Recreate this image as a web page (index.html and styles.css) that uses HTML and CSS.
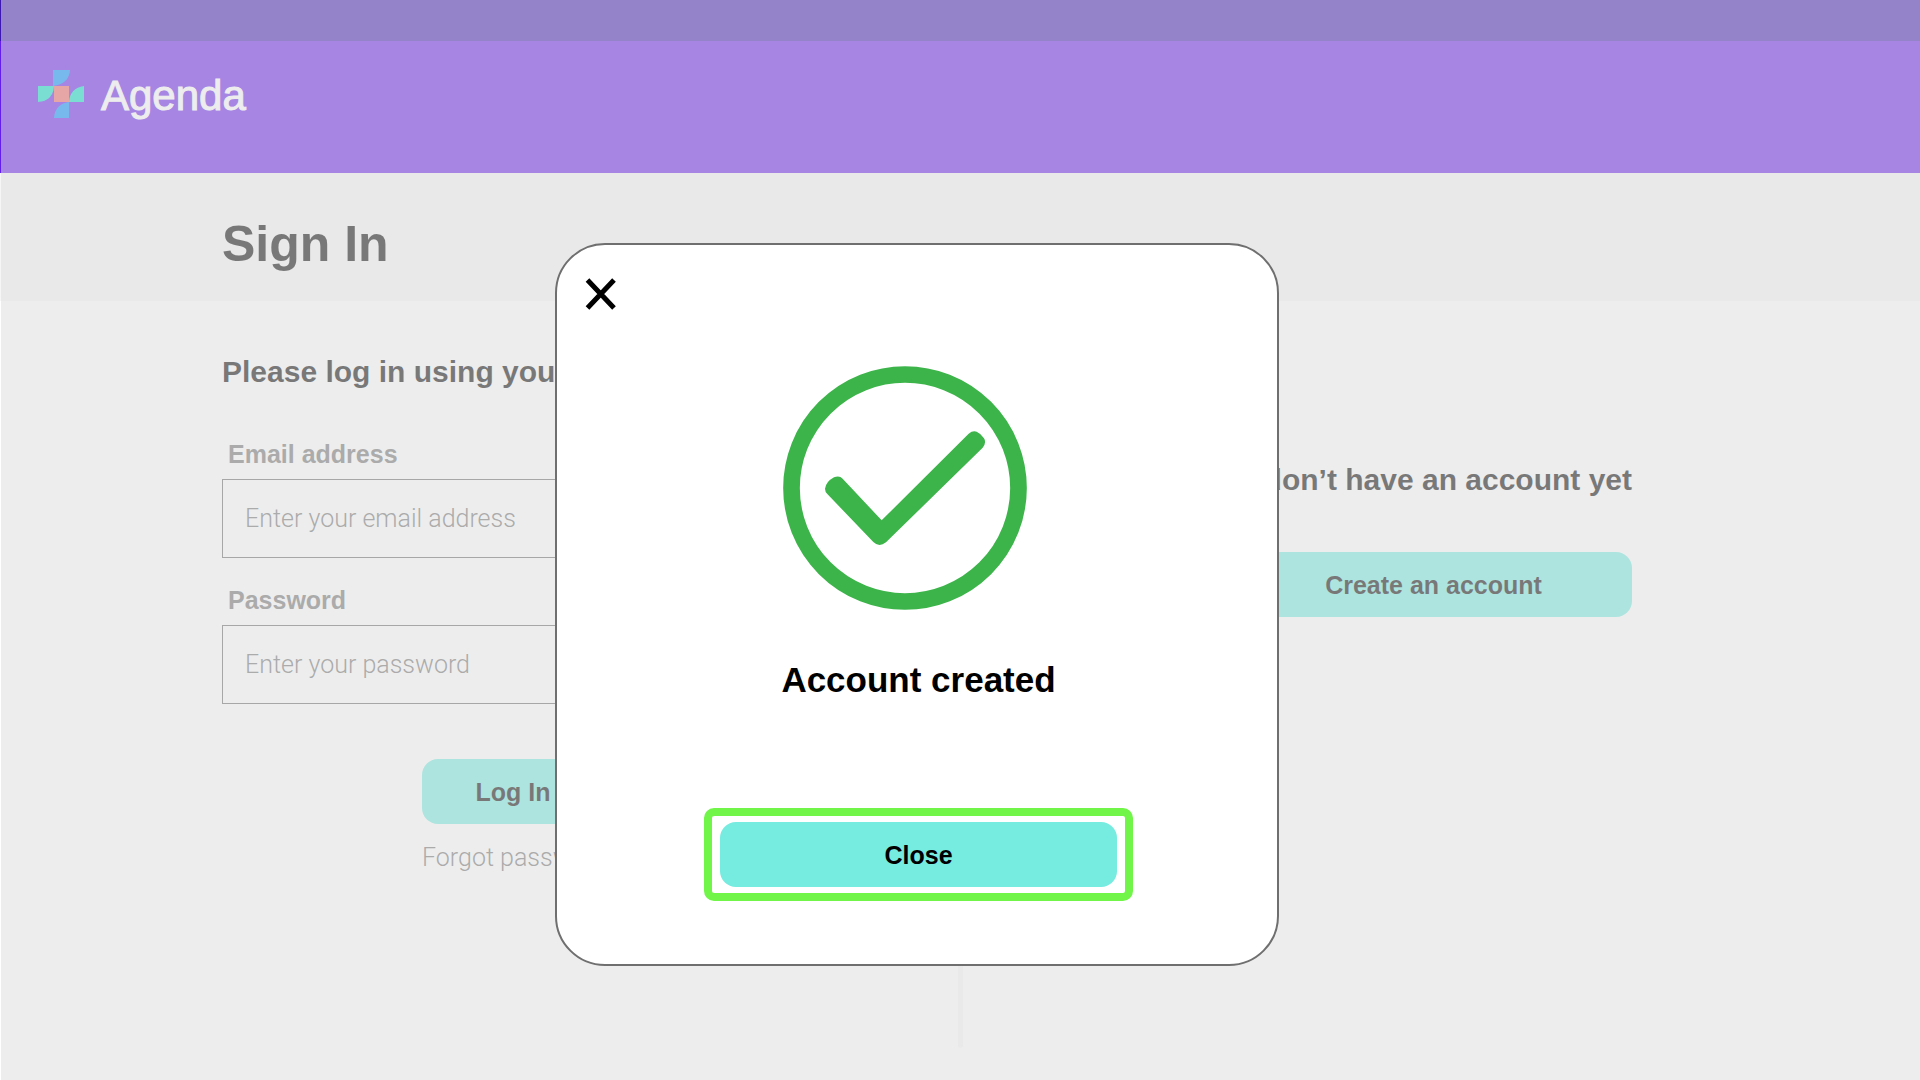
FILE: index.html
```
<!DOCTYPE html>
<html lang="en">
<head>
<meta charset="utf-8">
<title>Agenda – Sign In</title>
<link rel="stylesheet" href="styles.css">
</head>
<body>
<header class="header">
  <div class="status-bar"></div>
  <a class="brand" href="#">
    <svg class="brand-mark" viewBox="0 0 48 48" aria-hidden="true">
      <path fill="#028ffe" d="M16 0H33Q32 14 16 16ZM32 48H17Q18 34 32 32Z"/>
      <path fill="#06dec6" d="M1 16H17Q16 31 1 32ZM47 32H32Q33 18 47 16Z"/>
      <path fill="#f16464" d="M17 16H32V32H17Z"/>
    </svg>
    <span class="brand-name">Agenda</span>
  </a>
</header>
<div class="title-band"><h1 class="title">Sign In</h1></div>
<main class="main">
  <form class="login">
    <h2 class="heading">Please log in using your account</h2>
    <div class="field">
      <label class="label" for="email">Email address</label>
      <input class="input" id="email" type="email" placeholder="Enter your email address">
    </div>
    <div class="field">
      <label class="label" for="password">Password</label>
      <input class="input" id="password" type="password" placeholder="Enter your password">
    </div>
    <div class="login-actions">
      <button class="button" type="button">Log In</button>
      <a class="forgot" href="#">Forgot password</a>
    </div>
  </form>
  <div class="divider"></div>
  <section class="signup">
    <h2 class="heading">I don’t have an account yet</h2>
    <button class="button button-wide" type="button">Create an account</button>
  </section>
</main>
<div class="overlay">
  <div class="modal" role="dialog" aria-labelledby="modal-title">
    <button class="dismiss" type="button" aria-label="Dismiss">
      <svg class="dismiss-icon" viewBox="0 0 30 32" aria-hidden="true"><path d="M1.5 2L28 30M28 2L1.5 30" stroke="#000" stroke-width="5"/></svg>
    </button>
    <svg class="success-icon" viewBox="69 77 732 732" aria-hidden="true">
      <circle cx="435" cy="443" r="340.5" fill="none" stroke="#3cb44a" stroke-width="50"/>
      <path fill="#3cb44a" d="M195 445Q195 454 202 461L340 605Q357 622 378 606L668 322Q680 308 672 294Q664 280 650 274Q638 270 626 280L365 540L248 415Q238 404 222 411Q198 424 195 445Z"/>
    </svg>
    <h2 class="modal-title" id="modal-title">Account created</h2>
    <div class="highlight"><button class="button button-wide" type="button">Close</button></div>
  </div>
</div>
</body>
</html>
```
FILE: styles.css
```
* { box-sizing: border-box; }

body {
  margin: 0;
  min-height: 100vh;
  background: #fff;
  color: #000;
  font-family: "Liberation Sans", Arial, sans-serif;
  font-size: 25px;
  line-height: 28px;
}

h1, h2 { margin: 0; }

.header { background: #641ee9; padding-bottom: 51px; }
.status-bar { height: 41px; background: #3d18b0; }
.brand {
  display: inline-flex;
  gap: 16px;
  margin: 29px 0 0 37px;
  color: #fff;
  text-decoration: none;
  vertical-align: top;
}
.brand-mark { width: 48px; height: 48px; }
.brand-name { font-size: 42px; line-height: 52px; -webkit-text-stroke: 1px #fff; }

.title-band {
  display: flex;
  align-items: center;
  height: 128px;
  padding: 14px 222px 0;
  background: #f6f6f6;
}
.title { font-size: 50px; line-height: 56px; }

.main {
  display: grid;
  grid-template-columns: 1fr 5px 1fr;
  padding: 53px 0 32px;
}
.heading { font-size: 30px; line-height: 36px; }

.login {
  display: flex;
  flex-direction: column;
  gap: 28px;
  width: 582px;
  margin-left: 222px;
}
.login .heading { margin-bottom: 22px; }
.field { display: flex; flex-direction: column; gap: 11px; }
.label { padding-left: 6px; color: #6f6f6f; font-weight: 700; }
.input {
  width: 100%;
  height: 79px;
  padding: 0 22px;
  border: 1px solid #686868;
  border-radius: 0;
  background: transparent;
  font-family: Roboto, sans-serif;
  font-size: 25px;
  font-weight: 300;
}
.input::placeholder { color: #6f6f6f; opacity: 1; }
.login-actions {
  display: flex;
  flex-direction: column;
  gap: 20px;
  width: 182px;
  margin: 27px auto 0;
}
.forgot {
  color: #6f6f6f;
  font-family: Roboto, sans-serif;
  font-weight: 300;
  text-decoration: none;
  white-space: nowrap;
}

.button {
  height: 65px;
  padding: 1px 0 0;
  border: 0;
  border-radius: 16px;
  background: #76ebe0;
  color: #000;
  font: inherit;
  font-weight: 700;
}
.button-wide { width: 397px; }

.divider { height: 694px; border-radius: 3px; background: #f6f6f6; }

.signup {
  display: flex;
  flex-direction: column;
  align-items: flex-end;
  gap: 54px;
  padding: 108px 288px 0 0;
}

.overlay {
  position: fixed;
  inset: 0 0 0 1px;
  display: flex;
  justify-content: center;
  align-items: flex-start;
  padding: 243px 87px 0 0;
  background: rgba(221, 221, 221, 0.54);
}
.modal {
  display: flex;
  flex-direction: column;
  align-items: center;
  width: 724px;
  padding: 33px 26px 63px 29px;
  border: 2px solid #6f6f6f;
  border-radius: 50px;
  background: #fff;
}
.dismiss {
  display: flex;
  align-self: flex-start;
  padding: 0;
  border: 0;
  background: none;
}
.dismiss-icon { width: 30px; height: 32px; overflow: visible; }
.success-icon { width: 244px; height: 244px; margin: 56px 27px 50px 0; }
.modal-title { font-size: 35px; line-height: 40px; }
.highlight {
  display: flex;
  margin-top: 108px;
  padding: 6px 8px;
  border: 8px solid #70f548;
  border-radius: 10px;
}
```
